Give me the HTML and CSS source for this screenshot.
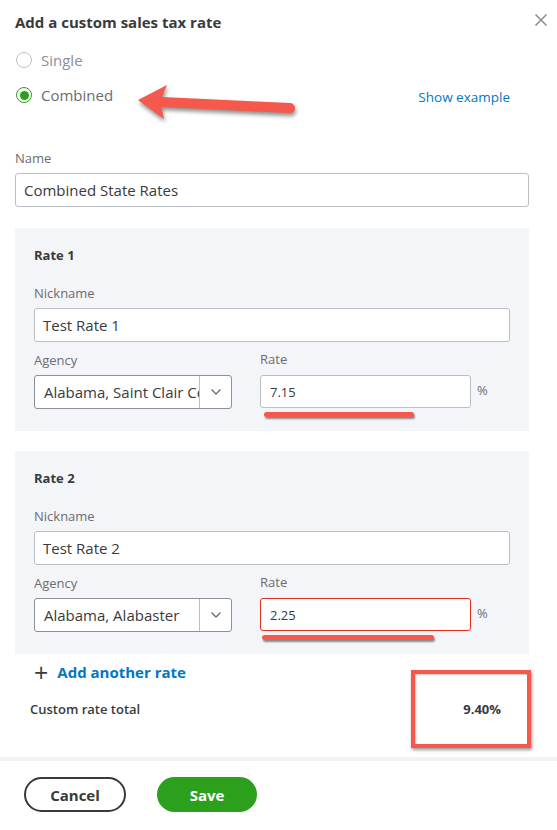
FILE: index.html
```html
<!DOCTYPE html>
<html lang="en">
<head>
    <meta charset="UTF-8">
    <meta name="viewport" content="width=device-width, initial-scale=1.0">
    <title>Add a custom sales tax rate</title>
    <link rel="stylesheet" href="styles.css">
</head>
<body>
    <div class="dialog">
        <div class="dialog-body">
            <!-- Header -->
            <div class="header">
                <h1 class="title">Add a custom sales tax rate</h1>
                <button class="close-btn" aria-label="Close">
                    <svg width="14" height="14" viewBox="0 0 14 14">
                        <path d="M1.5 1.5 L12.5 12.5 M12.5 1.5 L1.5 12.5" stroke="#8d9096" stroke-width="1.6" fill="none"/>
                    </svg>
                </button>
            </div>

            <!-- Rate type -->
            <div class="type-row">
                <div class="radio-list">
                    <label class="radio">
                        <span class="radio-dot"></span>
                        Single
                    </label>
                    <label class="radio checked">
                        <span class="radio-dot"></span>
                        Combined
                    </label>
                </div>
                <a class="link show-example" href="#">Show example</a>

                <!-- Callout arrow -->
                <svg class="callout-arrow" width="180" height="52" viewBox="0 0 180 52">
                    <g fill="#f5584c">
                        <line x1="32" y1="26" x2="160" y2="32" stroke="#f5584c" stroke-width="10" stroke-linecap="round"/>
                        <polygon points="8,24 37,9 30,26 34,43"/>
                    </g>
                </svg>
            </div>

            <!-- Name -->
            <div class="field">
                <label class="label">Name</label>
                <div class="input">Combined State Rates</div>
            </div>

            <!-- Rate 1 -->
            <div class="rate-box">
                <h2 class="rate-title">Rate 1</h2>
                <div class="field">
                    <label class="label">Nickname</label>
                    <div class="input">Test Rate 1</div>
                </div>
                <div class="rate-grid">
                    <div class="field">
                        <label class="label">Agency</label>
                        <div class="select">
                            <span class="select-value">Alabama, Saint Clair County</span>
                            <span class="select-arrow">
                                <svg width="12" height="8" viewBox="0 0 12 8"><path d="M1.5 1.5 L6 6 L10.5 1.5" stroke="#6b6c72" stroke-width="1.3" fill="none"/></svg>
                            </span>
                        </div>
                    </div>
                    <div class="field">
                        <label class="label label-rate">Rate</label>
                        <div class="rate-input-row">
                            <div class="input rate-input marked">7.15</div>
                            <span class="percent">%</span>
                        </div>
                    </div>
                </div>
            </div>

            <!-- Rate 2 -->
            <div class="rate-box">
                <h2 class="rate-title">Rate 2</h2>
                <div class="field">
                    <label class="label">Nickname</label>
                    <div class="input">Test Rate 2</div>
                </div>
                <div class="rate-grid">
                    <div class="field">
                        <label class="label">Agency</label>
                        <div class="select">
                            <span class="select-value">Alabama, Alabaster</span>
                            <span class="select-arrow">
                                <svg width="12" height="8" viewBox="0 0 12 8"><path d="M1.5 1.5 L6 6 L10.5 1.5" stroke="#6b6c72" stroke-width="1.3" fill="none"/></svg>
                            </span>
                        </div>
                    </div>
                    <div class="field">
                        <label class="label label-rate">Rate</label>
                        <div class="rate-input-row">
                            <div class="input rate-input error marked wide-mark">2.25</div>
                            <span class="percent">%</span>
                        </div>
                    </div>
                </div>
            </div>

            <a class="add-rate" href="#"><span class="plus">+</span> Add another rate</a>

            <div class="total-row">
                <span class="total-label">Custom rate total</span>
                <span class="total-value">9.40%</span>
            </div>
        </div>

        <!-- Footer -->
        <div class="footer">
            <button class="btn btn-cancel">Cancel</button>
            <button class="btn btn-save">Save</button>
        </div>
    </div>
</body>
</html>
```

FILE: styles.css
```css
* {
    margin: 0;
    padding: 0;
    box-sizing: border-box;
}

body {
    font-family: 'Open Sans', 'Liberation Sans', sans-serif;
    background: #fff;
    color: #393a3d;
}

.dialog {
    width: 557px;
    height: 830px;
    background: #fff;
}

.dialog-body {
    padding: 0 28px 0 15px;
}

/* Header */
.header {
    position: relative;
    height: 44px;
    display: flex;
    align-items: center;
}

.title {
    font-size: 15px;
    font-weight: 700;
    color: #393a3d;
    line-height: 20px;
}

.close-btn {
    position: absolute;
    right: -19px;
    top: 13px;
    width: 14px;
    height: 14px;
    border: none;
    background: none;
    cursor: pointer;
}

/* Radio options */
.type-row {
    position: relative;
    display: flex;
    justify-content: space-between;
    align-items: flex-end;
    padding-top: 5px;
}

.radio-list {
    display: flex;
    flex-direction: column;
    gap: 13px;
}

.radio {
    display: flex;
    align-items: center;
    gap: 9px;
    height: 22px;
    font-size: 15px;
    color: #8d9096;
    margin-left: 1px;
}

.radio-dot {
    width: 16px;
    height: 16px;
    border-radius: 50%;
    border: 1px solid #babec5;
    background: #fff;
    display: flex;
    align-items: center;
    justify-content: center;
}

.radio.checked {
    color: #6b6c72;
}

.radio.checked .radio-dot {
    border: 1.5px solid #2ca01c;
}

.radio.checked .radio-dot::after {
    content: "";
    width: 9px;
    height: 9px;
    border-radius: 50%;
    background: #2ca01c;
}

.link {
    color: #0077c5;
    text-decoration: none;
}

.show-example {
    font-size: 13.5px;
    margin-right: 19px;
    margin-bottom: 0;
}

.callout-arrow {
    position: absolute;
    left: 115px;
    top: 32px;
    filter: drop-shadow(1px 3px 2px rgba(0, 0, 0, 0.45));
}

/* Fields */
.field {
    display: flex;
    flex-direction: column;
}

.label {
    font-size: 13px;
    line-height: 16px;
    color: #6b6c72;
    margin-bottom: 7px;
}

.dialog-body > .field {
    margin-top: 44px;
}

.input {
    height: 34px;
    border: 1px solid #babec5;
    border-radius: 3px;
    background: #fff;
    font-size: 15px;
    color: #393a3d;
    padding: 0 8px;
    display: flex;
    align-items: center;
}

/* Rate boxes */
.rate-box {
    background: #f4f5f8;
    padding: 18px 19px 22px;
    margin-top: 21px;
}

.rate-box + .rate-box {
    margin-top: 20px;
}

.rate-title {
    font-size: 13px;
    font-weight: 700;
    line-height: 18px;
    color: #393a3d;
    margin-bottom: 21px;
}

.rate-grid {
    display: grid;
    grid-template-columns: 198px 1fr;
    gap: 28px;
    margin-top: 10px;
}

.label-rate {
    margin-top: -1px;
    margin-bottom: 8px;
}

.select {
    height: 34px;
    border: 1px solid #8d9096;
    border-radius: 3px;
    background: #fff;
    display: flex;
    overflow: hidden;
}

.select-value {
    flex: 1;
    font-size: 15px;
    padding-left: 9px;
    white-space: nowrap;
    overflow: hidden;
    display: flex;
    align-items: center;
}

.select-arrow {
    width: 32px;
    border-left: 1px solid #babec5;
    display: flex;
    align-items: center;
    justify-content: center;
}

.rate-input-row {
    display: flex;
    align-items: center;
    gap: 6px;
}

.rate-input {
    width: 211px;
    height: 33px;
    font-size: 13px;
    padding-left: 9px;
    position: relative;
}

.rate-input.error {
    border-color: #e0301e;
}

/* Highlight stroke under the rate fields */
.rate-input.marked::after {
    content: "";
    position: absolute;
    left: 3px;
    top: 36px;
    width: 150px;
    height: 5px;
    border-radius: 3px;
    background: #f5584c;
    box-shadow: 1px 2px 2px rgba(0, 0, 0, 0.45);
}

.rate-input.wide-mark::after {
    left: 1px;
    width: 172px;
}

.percent {
    font-size: 13px;
    color: #6b6c72;
    margin-top: -4px;
}

/* Totals */
.add-rate {
    display: flex;
    align-items: center;
    gap: 9px;
    margin: 8px 0 0 19px;
    height: 20px;
    font-size: 15px;
    font-weight: 700;
    color: #0077c5;
    text-decoration: none;
}

.plus {
    font-size: 25px;
    font-weight: 400;
    color: #393a3d;
    line-height: 20px;
}

.total-row {
    display: flex;
    justify-content: space-between;
    align-items: center;
    margin: 18px 0 0 15px;
    height: 18px;
}

.total-label {
    font-size: 13px;
    font-weight: 600;
    color: #393a3d;
}

.total-value {
    position: relative;
    font-size: 13px;
    font-weight: 700;
    color: #393a3d;
    margin-right: 28px;
}

.total-value::after {
    content: "";
    position: absolute;
    right: -30px;
    top: -30px;
    width: 112px;
    height: 70px;
    border: 4px solid #f5584c;
    box-shadow: 1px 2px 3px rgba(0, 0, 0, 0.4), inset 1px 1px 2px rgba(0, 0, 0, 0.25);
}

/* Footer */
.footer {
    margin-top: 39px;
    border-top: 4px solid #f1f2f5;
    padding: 16px 24px;
    display: flex;
    gap: 31px;
}

.btn {
    height: 35px;
    border-radius: 18px;
    font-family: inherit;
    font-size: 15px;
    font-weight: 700;
    cursor: pointer;
}

.btn-cancel {
    width: 102px;
    background: #fff;
    border: 2px solid #393a3d;
    color: #393a3d;
}

.btn-save {
    width: 100px;
    background: #2ca01c;
    border: none;
    color: #fff;
}
```
